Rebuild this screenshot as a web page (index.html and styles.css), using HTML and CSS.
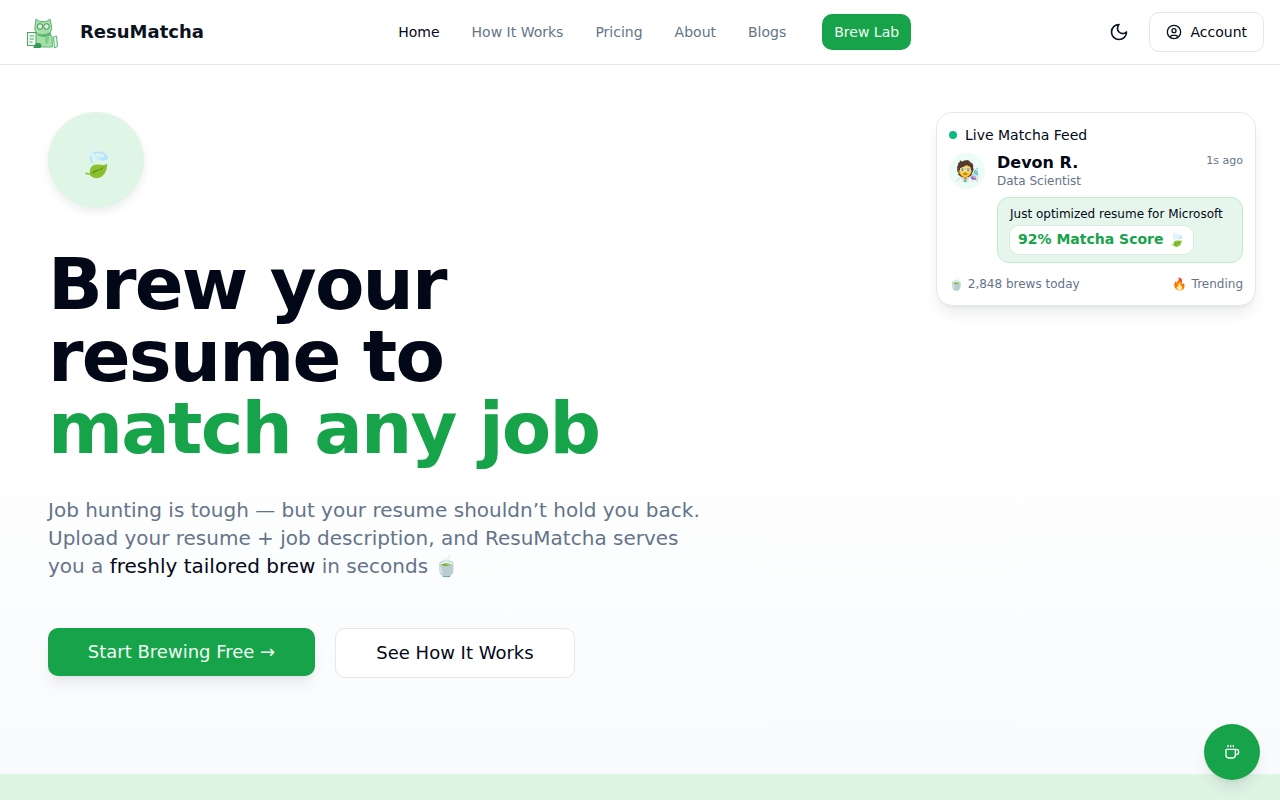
FILE: index.html
```html
<!DOCTYPE html>
<html lang="en">
<head>
<meta charset="utf-8">
<title>ResuMatcha</title>
<link rel="stylesheet" href="styles.css">
</head>
<body>
<header class="topbar">
  <a class="brand" href="#">
    <svg class="brand-logo" viewBox="0 0 36 36" width="36" height="36" aria-hidden="true">
      <path d="M12 6l3.500 2.500h7L26 6l1.500 7c.5 3-.5 6-2 7.500l2.500 3 .5 10.500H12l-1-12 2-2c-2-1.500-2.500-4-2-6.500z" fill="#a6e0a8" stroke="#5cb574" stroke-width="1"/>
      <circle cx="16" cy="13.500" r="2.800" fill="#d9f3d8" stroke="#3f8f5a" stroke-width="1"/>
      <circle cx="22.500" cy="13.500" r="2.800" fill="#d9f3d8" stroke="#3f8f5a" stroke-width="1"/>
      <path d="M13 20c4 2 9 1.500 13-1l1.500 3c-4 2.500-10 2.500-13.500.500z" fill="#5cb574"/>
      <path d="M21 23l4 1-1 7-3-1z" fill="#7fcf8c"/>
      <rect x="3.500" y="19.500" width="8.500" height="13" fill="#f4fcf3" stroke="#4aa566" stroke-width="1"/>
      <path d="M5.500 23h4.500M5.500 26h4.500M5.500 29h3" stroke="#4aa566" stroke-width="1"/>
      <path d="M9.500 35c0-4 5-6.500 7.500-4 1 2 0 4-1.500 4z" fill="#2f9a58"/>
      <path d="M29.500 24l3-1 1 10.500-3 1.500z" fill="#e2f6e1" stroke="#5cb574" stroke-width="1"/>
    </svg>
    <span class="brand-name">ResuMatcha</span>
  </a>
  <nav class="nav">
    <a class="nav-link is-active" href="#">Home</a>
    <a class="nav-link" href="#">How It Works</a>
    <a class="nav-link" href="#">Pricing</a>
    <a class="nav-link" href="#">About</a>
    <a class="nav-link" href="#">Blogs</a>
    <a class="nav-cta" href="#">Brew Lab</a>
  </nav>
  <div class="top-actions">
    <button class="theme-btn" type="button" aria-label="Toggle theme">
      <svg viewBox="0 0 24 24" width="20" height="20" fill="none" stroke="#0b1220" stroke-width="2" stroke-linecap="round" stroke-linejoin="round"><path d="M12 3a6 6 0 0 0 9 9 9 9 0 1 1-9-9Z"/></svg>
    </button>
    <button class="account-btn" type="button">
      <svg viewBox="0 0 24 24" width="16" height="16" fill="none" stroke="#0b1220" stroke-width="2" stroke-linecap="round" stroke-linejoin="round"><circle cx="12" cy="12" r="10"/><circle cx="12" cy="10" r="3"/><path d="M7 20.700V19a2 2 0 0 1 2-2h6a2 2 0 0 1 2 2v1.700"/></svg>
      <span>Account</span>
    </button>
  </div>
</header>

<main class="hero">
  <div class="hero-badge"><span>🍃</span></div>
  <h1 class="hero-title">Brew your<br>resume to<br><span class="accent">match any job</span></h1>
  <p class="hero-text">Job hunting is tough — but your resume shouldn’t hold you back. Upload your resume + job description, and ResuMatcha serves you a <span class="strong">freshly tailored brew</span> in seconds 🍵</p>
  <div class="hero-actions">
    <a class="btn-primary" href="#">Start Brewing Free →</a>
    <a class="btn-secondary" href="#">See How It Works</a>
  </div>

  <aside class="feed">
    <div class="feed-head"><i class="feed-dot"></i>Live Matcha Feed</div>
    <div class="feed-body">
      <div class="feed-avatar">🧑‍🔬</div>
      <div class="feed-main">
        <div class="feed-row">
          <div>
            <div class="feed-name">Devon R.</div>
            <div class="feed-role">Data Scientist</div>
          </div>
          <div class="feed-time">1s ago</div>
        </div>
        <div class="feed-bubble">
          <div class="feed-msg">Just optimized resume for Microsoft</div>
          <div class="feed-score">92% Matcha Score 🍃</div>
        </div>
      </div>
    </div>
    <div class="feed-foot"><span>🍵 2,848 brews today</span><span>🔥 Trending</span></div>
  </aside>
</main>

<div class="band"></div>

<button class="fab" type="button" aria-label="Brew">
  <svg viewBox="0 0 24 24" width="16" height="16" fill="none" stroke="#fff" stroke-width="2" stroke-linecap="round" stroke-linejoin="round"><path d="M10 2v2M14 2v2M6 2v2"/><path d="M16 8a1 1 0 0 1 1 1v8a4 4 0 0 1-4 4H7a4 4 0 0 1-4-4V9a1 1 0 0 1 1-1h14a4 4 0 1 1 0 8h-1"/></svg>
</button>
</body>
</html>
```
FILE: styles.css
```css
* { box-sizing: border-box; }
html, body { margin: 0; height: 800px; overflow: hidden; }
body {
  font-family: "DejaVu Sans", "Noto Color Emoji", sans-serif;
  color: #020817;
  background: #fff;
  display: flex;
  flex-direction: column;
}
a { color: inherit; text-decoration: none; }
button { font: inherit; color: inherit; background: none; border: 0; padding: 0; }

.topbar {
  height: 65px;
  flex: none;
  display: flex;
  justify-content: space-between;
  align-items: center;
  padding: 0 16px 0 24px;
  background: #fff;
  border-bottom: 1px solid #e5e7eb;
}
.brand { display: flex; align-items: center; gap: 20px; margin-top: -2px; }
.brand-logo { display: block; }
.brand-name { font-size: 18px; font-weight: 700; color: #0b1220; }

.nav { display: flex; align-items: center; gap: 32px; font-size: 14px; margin-left: 6px; }
.nav-link { color: #64748b; }
.nav-link.is-active { color: #020817; }
.nav-cta {
  color: #f0fdf4;
  background: #16a34a;
  border-radius: 10px;
  padding: 0 12px;
  height: 36px;
  display: flex;
  align-items: center;
  margin-left: 4px;
}

.top-actions { display: flex; justify-content: flex-end; align-items: center; gap: 10px; }
.theme-btn { width: 40px; height: 40px; display: flex; align-items: center; justify-content: center; }
.account-btn {
  display: flex;
  align-items: center;
  gap: 8px;
  height: 40px;
  padding: 0 16px;
  font-size: 14px;
  background: #fff;
  border: 1px solid #e5e7eb;
  border-radius: 10px;
}

.hero {
  position: relative;
  flex: 1;
  padding: 47px 48px 0;
  background: linear-gradient(180deg, #ffffff 50%, #f8fafc 100%);
}
.hero-badge {
  width: 96px;
  height: 96px;
  border-radius: 50%;
  background: #dff6e6;
  box-shadow: 0 4px 8px rgba(15, 23, 42, 0.08);
  display: flex;
  align-items: center;
  justify-content: center;
  font-size: 30px;
  padding: 2px 0 0 2px;
}
.hero-title {
  margin: 40px 0 0;
  font-size: 72px;
  line-height: 72px;
  font-weight: 700;
  letter-spacing: -1.8px;
  color: #020817;
}
.accent { color: #16a34a; }
.hero-text {
  margin: 32px 0 0;
  width: 672px;
  font-size: 20px;
  line-height: 28px;
  color: #64748b;
}
.strong { color: #020817; }
.hero-actions { display: flex; gap: 20px; margin-top: 48px; align-items: flex-start; }
.btn-primary {
  width: 267px;
  height: 48px;
  display: flex;
  align-items: center;
  justify-content: center;
  padding-bottom: 2px;
  font-size: 18px;
  color: #f0fdf4;
  background: #16a34a;
  border-radius: 10px;
  box-shadow: 0 10px 15px -3px rgba(15, 23, 42, 0.08), 0 4px 6px -4px rgba(15, 23, 42, 0.08);
}
.btn-secondary {
  width: 240px;
  height: 50px;
  display: flex;
  align-items: center;
  justify-content: center;
  padding-bottom: 2px;
  font-size: 18px;
  color: #020817;
  background: #fff;
  border: 1px solid #e5e7eb;
  border-radius: 10px;
}

.feed {
  position: absolute;
  left: 936px;
  top: 47px;
  width: 320px;
  height: 194px;
  padding: 13px 12px 0;
  background: #fff;
  border: 1px solid #e5e7eb;
  border-radius: 16px;
  box-shadow: 0 10px 15px -3px rgba(15, 23, 42, 0.08), 0 4px 6px -4px rgba(15, 23, 42, 0.08);
}
.feed-head { display: flex; align-items: center; gap: 8px; font-size: 14px; line-height: 18px; }
.feed-dot { width: 8px; height: 8px; border-radius: 50%; background: #10b981; }
.feed-body { display: flex; gap: 12px; margin-top: 9px; }
.feed-avatar {
  width: 36px;
  height: 36px;
  flex: none;
  border-radius: 50%;
  background: #ecfdf5;
  display: flex;
  align-items: center;
  justify-content: center;
  font-size: 20px;
  padding-left: 2px;
}
.feed-main { flex: 1; min-width: 0; }
.feed-row { display: flex; justify-content: space-between; align-items: flex-start; }
.feed-name { font-size: 16px; font-weight: 700; line-height: 20px; }
.feed-role { font-size: 12px; line-height: 16px; color: #64748b; }
.feed-time { font-size: 11px; line-height: 16px; color: #64748b; }
.feed-bubble {
  margin-top: 8px;
  height: 66px;
  padding: 8px 12px;
  background: #e7f6ec;
  border: 1px solid #c4e8d1;
  border-radius: 12px;
}
.feed-msg { font-size: 12px; line-height: 16px; }
.feed-score {
  display: inline-block;
  height: 30px;
  margin: 3px 0 0 -1px;
  padding: 0 7px 0 8px;
  font-size: 14px;
  line-height: 27px;
  font-weight: 700;
  color: #16a34a;
  background: #fff;
  border: 1px solid #d5ecdd;
  border-radius: 10px;
}
.feed-foot {
  display: flex;
  justify-content: space-between;
  margin-top: 13px;
  font-size: 12px;
  line-height: 16px;
  color: #64748b;
}

.band { height: 26px; flex: none; background: #dff5e4; }

.fab {
  position: fixed;
  right: 20px;
  bottom: 20px;
  width: 56px;
  height: 56px;
  border-radius: 50%;
  background: #16a34a;
  display: flex;
  align-items: center;
  justify-content: center;
  box-shadow: 0 10px 15px -3px rgba(15, 23, 42, 0.1), 0 4px 6px -4px rgba(15, 23, 42, 0.1);
}
```
